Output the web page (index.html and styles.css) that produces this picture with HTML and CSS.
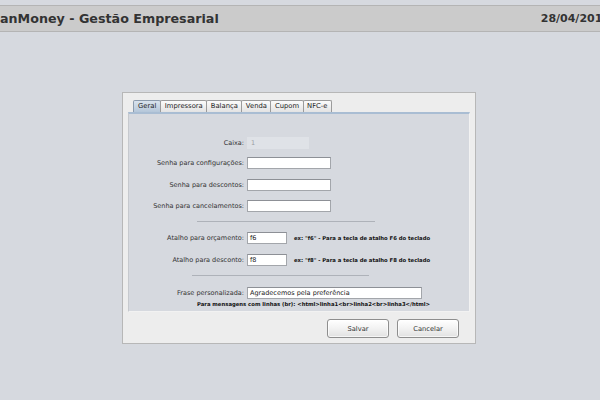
FILE: index.html
```html
<!DOCTYPE html>
<html lang="pt">
<head>
<meta charset="utf-8">
<title>Gestão Empresarial</title>
<link rel="stylesheet" href="styles.css">
</head>
<body>
<header class="topbar">
  <span class="title">anMoney - Gestão Empresarial</span>
  <span class="date">28/04/2016</span>
</header>
<div class="dialog">
  <div class="tabs">
    <span class="tab active">Geral</span>
    <span class="tab">Impressora</span>
    <span class="tab">Balança</span>
    <span class="tab">Venda</span>
    <span class="tab">Cupom</span>
    <span class="tab">NFC-e</span>
  </div>
  <div class="panel">
    <div class="row r1"><span class="lbl">Caixa:</span><span class="field disabled w-caixa">1</span></div>
    <div class="row r2"><span class="lbl">Senha para configurações:</span><span class="field w-senha"></span></div>
    <div class="row r3"><span class="lbl">Senha para descontos:</span><span class="field w-senha"></span></div>
    <div class="row r4"><span class="lbl">Senha para cancelamentos:</span><span class="field w-senha"></span></div>
    <div class="sep sep1"></div>
    <div class="row r5"><span class="lbl">Atalho para orçamento:</span><span class="field w-atalho">f6</span><span class="hint">ex: "f6" - Para a tecla de atalho F6 do teclado</span></div>
    <div class="row r6"><span class="lbl">Atalho para desconto:</span><span class="field w-atalho">f8</span><span class="hint">ex: "f8" - Para a tecla de atalho F8 do teclado</span></div>
    <div class="sep sep2"></div>
    <div class="row r7"><span class="lbl">Frase personalizada:</span><span class="field w-frase">Agradecemos pela preferência</span></div>
    <div class="hint hint2">Para mensagens com linhas (br): &lt;html&gt;linha1&lt;br&gt;linha2&lt;br&gt;linha3&lt;/html&gt;</div>
  </div>
  <div class="buttons">
    <button class="btn">Salvar</button>
    <button class="btn">Cancelar</button>
  </div>
</div>
</body>
</html>
```
FILE: styles.css
```css
html, body {
  margin: 0;
  padding: 0;
}
body {
  background: #d6d9df;
  width: 600px;
  height: 400px;
  overflow: hidden;
  font-family: "DejaVu Sans", Verdana, sans-serif;
  color: #222;
}
.topbar {
  margin-top: 5px;
  height: 25px;
  border-top: 1px solid #b4b4b4;
  border-bottom: 1px solid #b4b4b4;
  background: #cbcbcb;
  display: flex;
  align-items: center;
  justify-content: space-between;
  font-weight: bold;
  font-size: 12.7px;
  color: #333;
}
.title {
  padding-left: 0;
}
.date {
  font-size: 11px;
  margin-right: -10px;
}
.dialog {
  margin: 60px 0 0 122px;
  width: 342px;
  height: 243px;
  background: #ededed;
  border: 1px solid #b7b7b7;
  padding: 7px 5px 0 5px;
}
.tabs {
  display: flex;
  margin-left: 5px;
  height: 12px;
}
.tab {
  font-size: 6.8px;
  line-height: 10px;
  height: 11px;
  padding: 0 3.5px;
  border: 1px solid #9b9b9b;
  border-bottom: none;
  border-radius: 2px 2px 0 0;
  background: linear-gradient(#fbfbfb, #e3e3e3);
  color: #222;
  margin-right: -1px;
}
.tab.active {
  background: linear-gradient(#d9e3ee, #b4c6d9);
  border-color: #8c9bad;
  padding: 0 4px;
}
.panel {
  border-top: 2px solid #a9bdd3;
  border-left: 1px solid #c6c9ce;
  border-right: 1px solid #f2f2f2;
  border-bottom: 1px solid #f2f2f2;
  background: #d6d9df;
  padding-top: 23px;
  height: 174px;
}
.row {
  display: flex;
  align-items: center;
  height: 12px;
  font-size: 6.5px;
}
.lbl {
  width: 115px;
  padding-right: 3px;
  text-align: right;
  color: #333;
  flex: none;
}
.field {
  box-sizing: border-box;
  height: 12px;
  background: #fff;
  border: 1px solid #a3a6ab;
  border-top-color: #8d9096;
  padding-left: 2px;
  line-height: 10px;
  color: #222;
  flex: none;
}
.field.disabled {
  background: #dfe2e7;
  border-color: #dfe2e7;
  color: #9a9da2;
  padding-left: 3px;
}
.w-caixa { width: 62px; }
.w-senha { width: 84px; }
.w-atalho { width: 40px; }
.w-frase { width: 175px; }
.r2 { margin-top: 8px; }
.r3 { margin-top: 10px; }
.r4 { margin-top: 9px; }
.r5 { margin-top: 10px; }
.r6 { margin-top: 10px; }
.r7 { margin-top: 11px; }
.sep {
  height: 1px;
  background: #aeb2b9;
  margin-top: 9px;
}
.sep1 { margin-left: 68px; width: 178px; }
.sep2 { margin-left: 63px; width: 177px; }
.hint {
  font-size: 5.3px;
  font-weight: bold;
  color: #111;
  white-space: nowrap;
}
.row .hint {
  margin-left: 7px;
}
.hint2 {
  margin: 2px 0 0 68px;
  line-height: 6px;
}
.buttons {
  display: flex;
  justify-content: flex-end;
  gap: 8px;
  padding: 7px 11px 0 0;
}
.btn {
  width: 62px;
  height: 19px;
  border: 1px solid #8e8e8e;
  border-radius: 3px;
  background: linear-gradient(#ffffff, #f2f2f2 50%, #e1e1e1);
  font-family: "DejaVu Sans", Verdana, sans-serif;
  font-size: 6.7px;
  color: #333;
  padding: 0;
  box-shadow: inset 0 0 0 1px rgba(255,255,255,0.7);
}
```
